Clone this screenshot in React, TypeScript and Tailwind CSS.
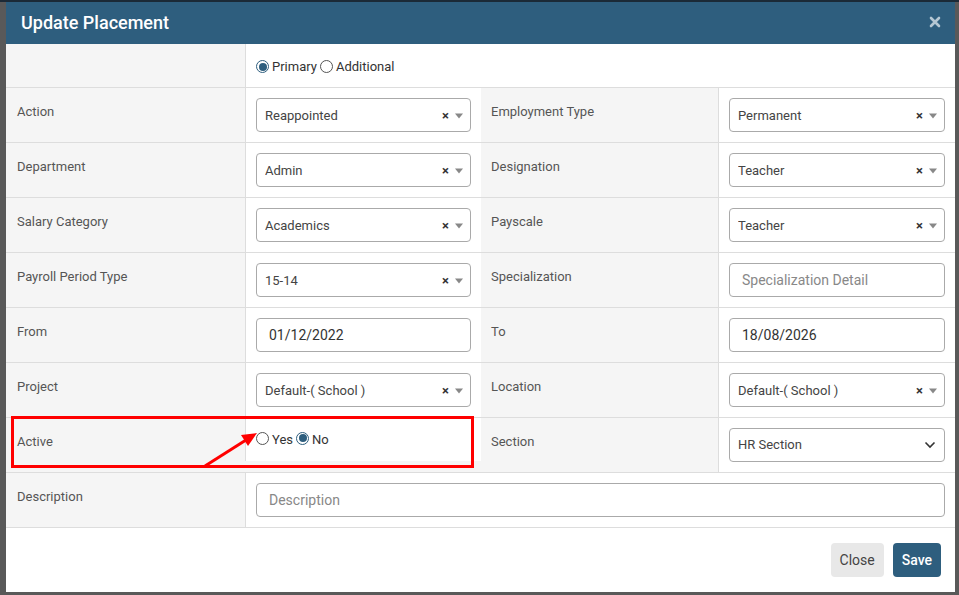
import React from 'react'

type Row =
  | { kind: 'select'; label: string; value: string }
  | { kind: 'text'; label: string; value?: string; placeholder?: string }

const ROWS: [Row, Row][] = [
  [
    { kind: 'select', label: 'Action', value: 'Reappointed' },
    { kind: 'select', label: 'Employment Type', value: 'Permanent' },
  ],
  [
    { kind: 'select', label: 'Department', value: 'Admin' },
    { kind: 'select', label: 'Designation', value: 'Teacher' },
  ],
  [
    { kind: 'select', label: 'Salary Category', value: 'Academics' },
    { kind: 'select', label: 'Payscale', value: 'Teacher' },
  ],
  [
    { kind: 'select', label: 'Payroll Period Type', value: '15-14' },
    { kind: 'text', label: 'Specialization', placeholder: 'Specialization Detail' },
  ],
  [
    { kind: 'text', label: 'From', value: '01/12/2022' },
    { kind: 'text', label: 'To', value: '18/08/2026' },
  ],
  [
    { kind: 'select', label: 'Project', value: 'Default-( School )' },
    { kind: 'select', label: 'Location', value: 'Default-( School )' },
  ],
]

function Radio({ checked }: { checked?: boolean }) {
  return (
    <span
      className={`inline-flex shrink-0 items-center justify-center w-[13px] h-[13px] rounded-full border bg-white ${
        checked ? 'border-[#2e5e7e]' : 'border-[#555]'
      }`}
    >
      {checked && <span className="w-[8px] h-[8px] rounded-full bg-[#2e5e7e]" />}
    </span>
  )
}

function Select2({ value }: { value: string }) {
  return (
    <div className="h-[34px] border border-[#aaa] rounded-[4px] bg-white flex items-center pl-[8px] pr-[6px] pt-[1px] text-[13px] text-[#444]">
      <span className="flex-1 truncate">{value}</span>
      <span className="text-[13px] font-bold text-[#333] mr-[5px] leading-none">×</span>
      <svg width="10" height="6" viewBox="0 0 10 6">
        <path d="M1 0.5h8L5 5.5z" fill="#888" />
      </svg>
    </div>
  )
}

function TextInput({ value, placeholder }: { value?: string; placeholder?: string }) {
  return (
    <div className="h-[34px] border border-[#aaa] rounded-[4px] bg-white flex items-center px-[12px] text-[14px]">
      {value ? (
        <span className="text-[#333]">{value}</span>
      ) : (
        <span className="text-[#888]">{placeholder}</span>
      )}
    </div>
  )
}

function Field({ row }: { row: Row }) {
  if (row.kind === 'select') return <Select2 value={row.value} />
  return <TextInput value={row.value} placeholder={row.placeholder} />
}

const labelCls = 'h-[55px] border-b border-[#ddd] bg-[#f5f5f5] px-[11px] pt-[14px] text-[13px] text-[#555]'
const valueCls = 'h-[55px] border-b border-l border-[#ddd] bg-white px-[10px] pt-[10px]'

export default function App() {
  return (
    <div
      className="relative w-[959px] h-[595px] bg-[#595959] overflow-hidden flex flex-col"
      style={{ fontFamily: 'Roboto, "Liberation Sans", sans-serif' }}
    >
      <div className="h-[2px] bg-[#1b2a37] shrink-0" />

      {/* Modal */}
      <div className="ml-[6px] w-[949px] h-[590px] bg-white flex flex-col shrink-0">
        <div className="h-[42px] bg-[#2e5e7e] flex items-center justify-between pl-[15px] pr-[14px] pb-[2px]">
          <h4 className="text-[18px] font-medium text-white">Update Placement</h4>
          <svg width="12" height="12" viewBox="0 0 12 12">
            <path d="M2 2l8 8M10 2l-8 8" stroke="#b5c7d3" strokeWidth="2.6" strokeLinecap="round" />
          </svg>
        </div>

        <div className="grid grid-cols-[239px_236px_237px_237px]">
          {/* radio row */}
          <div className="h-[44px] border-b border-[#ddd] bg-[#f5f5f5]" />
          <div className="col-span-3 h-[44px] border-b border-l border-[#ddd] bg-white flex items-center gap-[3px] pl-[10px] pt-[2px] text-[13px] text-[#333]">
            <Radio checked />
            <span>Primary</span>
            <Radio />
            <span>Additional</span>
          </div>

          {ROWS.map(([a, b]) => (
            <React.Fragment key={a.label}>
              <div className={labelCls}>{a.label}</div>
              <div className={valueCls}>
                <Field row={a} />
              </div>
              <div className={`${labelCls} !px-[10px]`}>{b.label}</div>
              <div className={valueCls}>
                <Field row={b} />
              </div>
            </React.Fragment>
          ))}

          {/* Active / Section */}
          <div className={labelCls}>Active</div>
          <div className="h-[55px] border-b border-[#ddd] bg-[#f5f5f5]">
            <div className="h-[43px] border-l border-[#ddd] bg-white flex items-center gap-[3px] pl-[10px] pb-[3px] text-[13px] text-[#333]">
              <Radio />
              <span className="mt-[3px]">Yes</span>
              <Radio checked />
              <span className="mt-[3px]">No</span>
            </div>
          </div>
          <div className={`${labelCls} !px-[10px]`}>Section</div>
          <div className={valueCls}>
            <div className="h-[34px] border border-[#aaa] rounded-[4px] bg-white flex items-center pl-[8px] pr-[8px] text-[13px] text-[#444]">
              <span className="flex-1">HR Section</span>
              <svg width="12" height="8" viewBox="0 0 12 8">
                <path d="M1.5 1.5l4.5 4.5 4.5-4.5" stroke="#333" strokeWidth="1.6" fill="none" />
              </svg>
            </div>
          </div>

          {/* Description */}
          <div className={labelCls}>Description</div>
          <div className={`${valueCls} col-span-3`}>
            <TextInput placeholder="Description" />
          </div>
        </div>

        <div className="flex-1 flex justify-end items-start gap-[9px] pt-[15px] pr-[14px]">
          <button className="h-[34px] px-[9px] rounded-[4px] bg-[#e8e8e8] text-[14px] text-[#444]">Close</button>
          <button className="h-[34px] px-[9px] rounded-[4px] bg-[#2e5e7e] text-[14px] font-medium text-white">
            Save
          </button>
        </div>
      </div>

      {/* annotation */}
      <div className="absolute left-[11px] top-[416px] w-[463px] h-[52px] border-[3px] border-[#ff0000]" />
      <svg className="absolute left-0 top-0" width="959" height="595" viewBox="0 0 959 595">
        <line x1="205" y1="466" x2="246" y2="440" stroke="#ff0000" strokeWidth="3" />
        <path d="M257 433 L241 435 L248 446 Z" fill="#ff0000" />
      </svg>
    </div>
  )
}
